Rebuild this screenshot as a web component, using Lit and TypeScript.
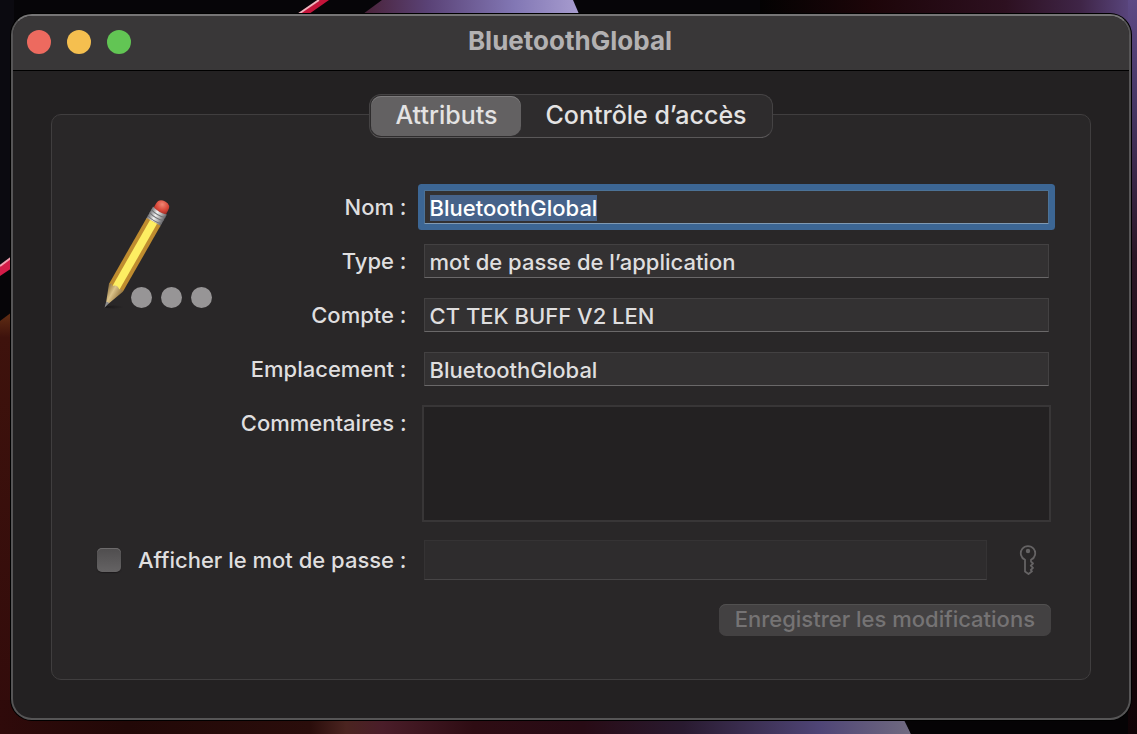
import { LitElement, html, css, svg } from "lit";
import { customElement, state, query } from "lit/decorators.js";

@customElement("desktop-wallpaper")
export class DesktopWallpaper extends LitElement {
  static styles = css`
    :host {
      display: block;
    }
    .picture {
      display: block;
      width: 100%;
      height: 100%;
    }
  `;

  render() {
    return html`
      <svg class="picture" viewBox="0 0 1137 734" preserveAspectRatio="none" aria-hidden="true">
        <defs>
          <linearGradient id="beam">
            <stop offset="0" stop-color="#4a2238" />
            <stop offset="0.3" stop-color="#5a4276" />
            <stop offset="0.7" stop-color="#8277b4" />
            <stop offset="1" stop-color="#a79ccf" />
          </linearGradient>
          <linearGradient id="top-right">
            <stop offset="0" stop-color="#030202" />
            <stop offset="0.3" stop-color="#1d0509" />
            <stop offset="0.65" stop-color="#2d1020" />
            <stop offset="0.85" stop-color="#3f2547" />
            <stop offset="1" stop-color="#5d4a85" />
          </linearGradient>
          <linearGradient id="right-edge" x2="0" y2="1">
            <stop offset="0" stop-color="#5d4a85" />
            <stop offset="0.15" stop-color="#463563" />
            <stop offset="0.35" stop-color="#2b1626" />
            <stop offset="0.6" stop-color="#1e0a12" />
            <stop offset="1" stop-color="#100306" />
          </linearGradient>
          <linearGradient id="left-glow" x2="0" y2="1">
            <stop offset="0" stop-color="#632f14" />
            <stop offset="0.06" stop-color="#3e120c" />
            <stop offset="1" stop-color="#320b0b" />
          </linearGradient>
          <linearGradient id="bottom">
            <stop offset="0" stop-color="#2f0a0a" />
            <stop offset="0.14" stop-color="#220807" />
            <stop offset="0.34" stop-color="#2a0d0b" />
            <stop offset="0.38" stop-color="#4b2420" />
            <stop offset="0.42" stop-color="#4a1d29" />
            <stop offset="0.52" stop-color="#2e0c13" />
            <stop offset="0.64" stop-color="#280b15" />
            <stop offset="0.75" stop-color="#291a30" />
            <stop offset="0.9" stop-color="#4f4576" />
            <stop offset="1" stop-color="#706a80" />
          </linearGradient>
        </defs>
        <rect width="1137" height="734" fill="#060508" />
        <rect width="14" height="270" fill="#0b0a10" />
        <path d="M296 16 320 0H329L309 14Z" fill="#c4143a" />
        <path d="M297 15 319 0" stroke="#f0b3bd" stroke-width="2" />
        <path d="M363 14 382 0H573L579 14Z" fill="url(#beam)" />
        <rect x="760" width="377" height="40" fill="url(#top-right)" />
        <rect x="1128" width="9" height="734" fill="url(#right-edge)" />
        <path d="M0 266 12 257V268L0 276Z" fill="#d41c48" />
        <path d="M0 266 12 257" stroke="#f0a0b0" stroke-width="2" />
        <path d="M0 321 12 312V734H0Z" fill="url(#left-glow)" />
        <path d="M0 700H897L911 734H0Z" fill="url(#bottom)" />
        <path d="M894 700H1128V734H911Z" fill="#050305" />
      </svg>
    `;
  }
}

@customElement("password-artwork")
export class PasswordArtwork extends LitElement {
  static styles = css`
    :host {
      display: block;
    }
    .art {
      display: block;
      width: 120px;
      height: 116px;
    }
  `;

  render() {
    const dots = [44.5, 74.5, 104.5];
    return html`
      <svg class="art" viewBox="0 0 120 116" aria-hidden="true">
        <defs>
          <linearGradient id="metal">
            <stop offset="0" stop-color="#77777a" />
            <stop offset="0.4" stop-color="#f1f1f1" />
            <stop offset="0.65" stop-color="#bdbdbd" />
            <stop offset="1" stop-color="#66666a" />
          </linearGradient>
          <linearGradient id="wood">
            <stop offset="0" stop-color="#8e713e" />
            <stop offset="0.45" stop-color="#dcc48a" />
            <stop offset="1" stop-color="#94743e" />
          </linearGradient>
          <radialGradient id="rubber" cx="0.42" cy="0.3" r="0.7">
            <stop offset="0" stop-color="#f08674" />
            <stop offset="0.6" stop-color="#da4a3b" />
            <stop offset="1" stop-color="#a52f28" />
          </radialGradient>
          <linearGradient id="shade">
            <stop offset="0" stop-color="#1a1819" />
            <stop offset="1" stop-color="#292728" />
          </linearGradient>
        </defs>
        <ellipse cx="17" cy="112" rx="10" ry="1.5" fill="url(#shade)" />
        <g transform="translate(8 112) rotate(29.7)">
          <path d="M-7-108V-115Q-7-121.500 0-121.500Q7-121.500 7-115V-108Z" fill="url(#rubber)" />
          <path d="M-8-111Q0-108 8-111V-97H-8Z" fill="url(#metal)" />
          <path d="M-8-107.500Q0-105 8-107.500M-8-104Q0-101.500 8-104M-8-100.500Q0-98 8-100.500" stroke="#717174" stroke-width="1" fill="none" />
          <path d="M-8-98H8V-22H-8Z" fill="#bf8c2f" />
          <path d="M-4-98H4V-22H-4Z" fill="#fdee62" />
          <path d="M-8-22Q-6-25-4-22Q0-26 4-22Q6-25 8-22L1.500-5H-1.500Z" fill="url(#wood)" />
          <path d="M-1.700-5.500H1.700L0 1Z" fill="#8b8b8d" />
        </g>
        ${dots.map((x) => svg`<circle cx=${x} cy="102.500" r="10.500" fill="#979596" />`)}
      </svg>
    `;
  }
}

@customElement("app-root")
export class AppRoot extends LitElement {
  static styles = css`
    :host {
      display: block;
      font-family: Inter, "Liberation Sans", sans-serif;
      font-size: 22px;
      font-weight: 500;
      line-height: 28px;
      color: #dfdedf;
    }
    .desktop {
      position: relative;
      display: flex;
      box-sizing: border-box;
      min-height: 100vh;
      padding: 14px 6px 14px 11px;
      overflow: hidden;
    }
    .wallpaper {
      position: absolute;
      inset: 0;
    }
    .window {
      position: relative;
      flex: 1;
      display: flex;
      flex-direction: column;
      box-sizing: border-box;
      min-width: 0;
      border: 2px solid #565556;
      border-top-color: #767576;
      border-radius: 21px;
      background: #232122;
      box-shadow: 0 0 0 1px #000;
      overflow: hidden;
    }
    .titlebar {
      display: grid;
      grid-template-columns: 1fr auto 1fr;
      align-items: center;
      box-sizing: border-box;
      height: 55px;
      padding: 0 16px 2px 14px;
      background: #393738;
      border-bottom: 1px solid #000;
    }
    .lights {
      display: flex;
      gap: 16px;
    }
    .light {
      width: 24px;
      height: 24px;
      padding: 0;
      border: 0;
      border-radius: 50%;
    }
    .close {
      background: #ed6a5f;
    }
    .minimise {
      background: #f5bf4f;
    }
    .zoom {
      background: #62c554;
    }
    .title {
      margin: 0;
      padding-bottom: 2px;
      font-size: 26px;
      line-height: 32px;
      font-weight: 700;
      color: #b3b1b2;
    }
    .content {
      flex: 1;
      display: flex;
      flex-direction: column;
      padding: 23px 38px 38px;
    }
    .tabs {
      position: relative;
      align-self: center;
      display: flex;
      box-sizing: border-box;
      height: 44px;
      padding: 1px;
      border: 1px solid #454344;
      border-bottom-color: #5a5859;
      border-radius: 12px;
      background: #2e2c2d;
    }
    .tab {
      padding: 0 24px 2px;
      border: 0;
      border-radius: 10px;
      background: none;
      font: inherit;
      font-size: 25px;
      color: #e4e3e3;
    }
    .tab.selected {
      background: #636162;
      box-shadow: inset 0 1px #7d7b7c;
    }
    .panel {
      flex: 1;
      margin-top: -24px;
      padding: 74px 39px 43px 45px;
      border: 1px solid #403e3f;
      border-radius: 10px;
      background: #292728;
    }
    .form {
      display: grid;
      grid-template-columns: 120px auto minmax(0, 1fr);
      grid-template-rows: repeat(4, 36px);
      align-items: center;
      row-gap: 18px;
    }
    .art {
      grid-column: 1;
      grid-row: 1 / span 4;
      align-self: start;
      padding-top: 6px;
    }
    .label {
      grid-column: 2;
      justify-self: end;
      padding: 4px 15px 4px 0;
    }
    .comments-label {
      align-self: start;
    }
    .field {
      grid-column: 3;
      box-sizing: border-box;
      min-width: 0;
      height: 34px;
      margin: 0 2px;
      padding: 2px 5px 0;
      border: 1px solid #434142;
      border-bottom-color: #6a6869;
      border-radius: 0;
      outline: 0;
      background: #333132;
      font: inherit;
      color: #dfdedf;
    }
    .field:focus {
      border-color: #4c7296;
      border-bottom-color: #7f9ab4;
      box-shadow: 0 0 0 6px #3c6694;
      border-radius: 1px;
      color: #fff;
    }
    .field::selection {
      background: #466289;
      color: #fff;
    }
    .comments {
      display: block;
      height: 117px;
      margin: 0;
      border: 2px solid #383637;
      background: #232122;
      resize: none;
    }
    .reveal {
      grid-column: 1 / span 2;
      display: flex;
      align-items: center;
      gap: 17px;
      padding-right: 15px;
      white-space: nowrap;
    }
    .check {
      appearance: none;
      width: 24px;
      height: 24px;
      margin: 0;
      border-radius: 5px;
      background: linear-gradient(#4f4d4e, #656364);
      box-shadow: inset 0 1px #6d6b6c, 0 1px 1px #1c1a1b;
    }
    .secret {
      grid-column: 3;
      display: flex;
      align-items: center;
      gap: 30px;
      padding-right: 14px;
    }
    .password {
      flex: 1;
      height: 40px;
      border-color: #353334;
      border-bottom-color: #474546;
      background: #2e2c2d;
    }
    .key {
      display: flex;
      padding: 0;
      border: 0;
      background: none;
      color: #656364;
    }
    .key-icon {
      width: 18px;
      height: 30px;
    }
    .actions {
      display: flex;
      justify-content: flex-end;
      margin-top: 24px;
    }
    .save {
      height: 32px;
      padding: 0 16px 2px;
      border: 0;
      border-radius: 7px;
      background: #434142;
      box-shadow: inset 0 1px #515050;
      font: inherit;
      color: #757374;
    }
  `;

  @state() private tab = "Attributs";
  @state() private revealed = false;
  @query("#name") private nameField!: HTMLInputElement;

  private rows = [
    { id: "name", label: "Nom", value: "BluetoothGlobal" },
    { id: "type", label: "Type", value: "mot de passe de l’application" },
    { id: "account", label: "Compte", value: "CT TEK BUFF V2 LEN" },
    { id: "place", label: "Emplacement", value: "BluetoothGlobal" },
  ];

  firstUpdated() {
    this.nameField.focus();
    this.nameField.select();
  }

  render() {
    return html`
      <div class="desktop">
        <desktop-wallpaper class="wallpaper"></desktop-wallpaper>
        <main class="window">
          <header class="titlebar">
            <div class="lights">
              <button class="light close" aria-label="Fermer"></button>
              <button class="light minimise" aria-label="Réduire"></button>
              <button class="light zoom" aria-label="Agrandir"></button>
            </div>
            <h1 class="title">BluetoothGlobal</h1>
          </header>
          <div class="content">
            <div class="tabs" role="tablist">
              ${["Attributs", "Contrôle d’accès"].map(
                (name) => html`
                  <button
                    class="tab ${name === this.tab ? "selected" : ""}"
                    role="tab"
                    aria-selected=${name === this.tab}
                    @click=${() => (this.tab = name)}
                  >${name}</button>
                `
              )}
            </div>
            <section class="panel">
              <form class="form" @submit=${(e: Event) => e.preventDefault()}>
                <password-artwork class="art"></password-artwork>
                ${this.rows.map(
                  (row) => html`
                    <label class="label" for=${row.id}>${row.label} :</label>
                    <input class="field" id=${row.id} type="text" .value=${row.value} />
                  `
                )}
                <label class="label comments-label" for="comments">Commentaires :</label>
                <textarea class="field comments" id="comments"></textarea>
                <label class="reveal">
                  <input
                    class="check"
                    type="checkbox"
                    .checked=${this.revealed}
                    @change=${() => (this.revealed = !this.revealed)}
                  />
                  Afficher le mot de passe :
                </label>
                <div class="secret">
                  <input
                    class="field password"
                    type=${this.revealed ? "text" : "password"}
                    aria-label="Mot de passe"
                    disabled
                  />
                  <button class="key" type="button" aria-label="Assistant de mot de passe" disabled>
                    <svg class="key-icon" viewBox="0 0 18 30" fill="none" stroke="currentColor" stroke-width="1.800" stroke-linejoin="round">
                      <path d="M6 14.800A7.200 7.200 0 1 1 12 14.800V16.500L14 18.500 11.800 20.700 14 22.900 11.800 25 13 26.300 9.500 29 6 26.500Z" />
                      <circle cx="9" cy="6" r="2.200" fill="currentColor" stroke="none" />
                    </svg>
                  </button>
                </div>
              </form>
              <div class="actions">
                <button class="save" type="button" disabled>Enregistrer les modifications</button>
              </div>
            </section>
          </div>
        </main>
      </div>
    `;
  }
}
